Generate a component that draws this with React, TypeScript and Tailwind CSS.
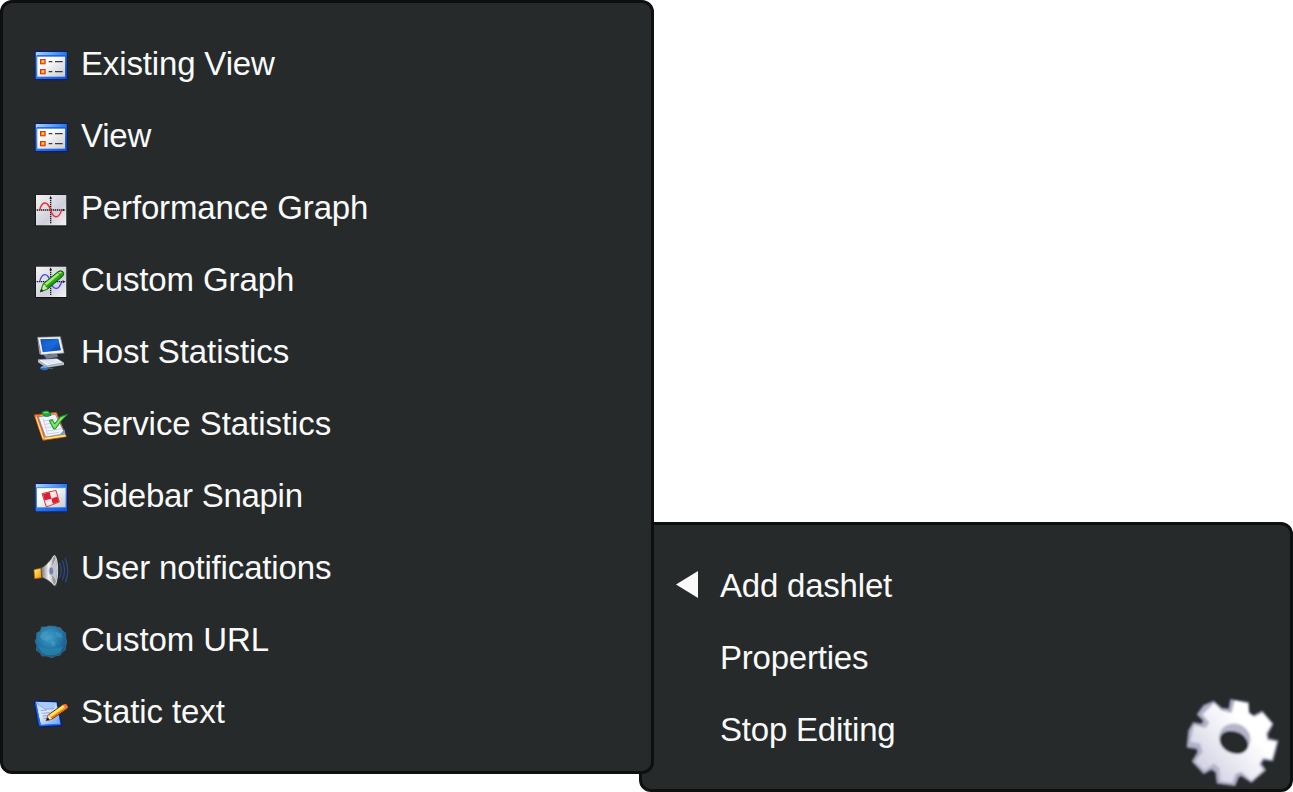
import type { ReactNode } from 'react';

function Icon({ box, children }: { box: string; children: ReactNode }) {
  return (
    <svg viewBox={box} className="mt-1 h-9 w-9 shrink-0" fill="none">
      {children}
    </svg>
  );
}

function Gradients() {
  return (
    <svg className="absolute h-0 w-0" aria-hidden="true">
      <defs>
        <linearGradient id="title" x1="0" x2="1" y1="0" y2="0">
          <stop offset="0" stopColor="#a5d2ff" />
          <stop offset="1" stopColor="#2379f0" />
        </linearGradient>
        <linearGradient id="frame" x1="0" x2="1" y1="0" y2="1">
          <stop offset="0" stopColor="#4b96f8" />
          <stop offset="1" stopColor="#0a58dc" />
        </linearGradient>
        <linearGradient id="paper" x1="0" x2="1" y1="0" y2="1">
          <stop offset="0.3" stopColor="#ffffff" />
          <stop offset="1" stopColor="#c9c9d2" />
        </linearGradient>
        <linearGradient id="plot" x1="0" x2="1" y1="0" y2="1">
          <stop offset="0" stopColor="#f4f4f6" />
          <stop offset="0.4" stopColor="#dcdce3" />
          <stop offset="0.6" stopColor="#d0cfdb" />
          <stop offset="1" stopColor="#f5f5f7" />
        </linearGradient>
        <linearGradient id="screen" x1="0" x2="1" y1="0" y2="1">
          <stop offset="0" stopColor="#0634a2" />
          <stop offset="0.55" stopColor="#1767d9" />
          <stop offset="1" stopColor="#073a9c" />
        </linearGradient>
        <linearGradient id="cone" x1="0" x2="1" y1="0" y2="0">
          <stop offset="0" stopColor="#6f6f73" />
          <stop offset="0.5" stopColor="#f4f4f4" />
          <stop offset="1" stopColor="#87878e" />
        </linearGradient>
        <linearGradient id="gold" x1="0" x2="1" y1="0" y2="1">
          <stop offset="0" stopColor="#fff58a" />
          <stop offset="0.5" stopColor="#ffc52d" />
          <stop offset="1" stopColor="#ef8309" />
        </linearGradient>
        <radialGradient id="globe" cx="0.45" cy="0.35" r="0.6">
          <stop offset="0" stopColor="#429cc9" />
          <stop offset="0.6" stopColor="#2379aa" />
          <stop offset="1" stopColor="#165b8c" />
        </radialGradient>
        <linearGradient id="note" x1="0" x2="1" y1="0" y2="1">
          <stop offset="0" stopColor="#a8ccff" />
          <stop offset="0.4" stopColor="#e1edff" />
          <stop offset="1" stopColor="#5e9df8" />
        </linearGradient>
        <linearGradient id="gear" x1="0.1" x2="0.8" y1="0.8" y2="0.2">
          <stop offset="0" stopColor="#d3d2e2" />
          <stop offset="0.45" stopColor="#ededf5" />
          <stop offset="0.8" stopColor="#ffffff" />
        </linearGradient>
        <filter id="gearSoft" x="-10%" y="-10%" width="120%" height="120%">
          <feGaussianBlur stdDeviation="3.6" />
        </filter>
        <filter id="soft">
          <feGaussianBlur stdDeviation="1.1" />
        </filter>
      </defs>
    </svg>
  );
}

function ViewIcon() {
  return (
    <Icon box="99 54 108 108">
      <rect x="104" y="62" width="99" height="89" rx="3" fill="#101b68" />
      <rect x="107" y="66" width="93" height="81" fill="url(#frame)" />
      <rect x="108" y="66" width="91" height="10" fill="url(#title)" />
      <rect x="111" y="76" width="85" height="4" fill="#1458c8" />
      <rect x="112" y="80" width="83" height="60" fill="url(#paper)" />
      {[87, 117].map((y) => (
        <g key={y}>
          <rect x="120" y={y} width="17" height="16" fill="#df3422" />
          <rect x="123" y={y + 4} width="11" height="9" fill="#f78a18" />
          <rect x="126" y={y + 4} width="6" height="6" fill="#ffe928" />
          <path d={`M146 ${y + 8}h11M165 ${y + 8}h23`} stroke="#3a3a40" strokeWidth="4" />
        </g>
      ))}
    </Icon>
  );
}

function Plot({ y, color }: { y: number; color: string }) {
  return (
    <g transform={`translate(0 ${y})`}>
      <rect x="46" y="-1" width="95" height="95" fill="#101212" />
      <rect x="48" y="0" width="91" height="91" fill="url(#plot)" />
      <path d="M50 45H132M92 9V86" stroke="#17171b" strokeWidth="4" strokeDasharray="4 2" />
      <path d="M92 2l-4 9h8zM137 45l-9-4v8z" fill="#17171b" />
      <path d="M59 45C66 18 81 17 91 42C99 71 115 74 125 45" stroke={color} strokeWidth="4" />
    </g>
  );
}

function PerformanceIcon() {
  return (
    <Icon box="39 36 108 108">
      <Plot y={45} color="#f52a2a" />
    </Icon>
  );
}

function CustomGraphIcon() {
  return (
    <Icon box="39 252 108 108">
      <Plot y={260} color="#4242ee" />
      <path d="M61 336L70 311L113 276Q120 269 129 275Q134 281 128 289L83 327Z" fill="#2ba81d" stroke="#0b5d0c" strokeWidth="3" />
      <path d="M73 311L116 277Q122 273 126 277L78 317Z" fill="#a3ee74" />
      <path d="M80 325L127 288" stroke="#128018" strokeWidth="3" />
      <path d="M62 335L70 312L77 314L78 320L83 322L82 327Z" fill="#c7ec97" stroke="#247718" strokeWidth="2" />
      <path d="M61 336l3-10 7 6z" fill="#0a370e" />
      <path d="M112 278Q122 281 123 290" stroke="#117413" strokeWidth="2" />
    </Icon>
  );
}

function HostIcon() {
  return (
    <Icon box="39 48 108 108">
      <path d="M65 99L89 104L110 97L114 111L80 116Z" fill="#777e91" />
      <path d="M53 52L121 50L132 99L63 104Z" fill="#f2f2f4" stroke="#8c8d99" strokeWidth="2" />
      <path d="M53 52L63 104L58 101L53 62Z" fill="#9a9daa" />
      <path d="M61 58L115 56L123 91L68 97Z" fill="url(#screen)" />
      <path d="M64 60L113 57L115 65Q92 81 67 82Z" fill="#1c75e4" opacity=".5" />
      <path d="M54 120L112 117L132 129L132 135L80 143L54 127Z" fill="#b8c0d4" />
      <path d="M54 119L111 116L131 128L81 137Z" fill="#fafaff" stroke="#8898b9" strokeWidth="2" />
      <path d="M65 121L106 119L119 127L83 132Z" fill="#ccd6ed" />
      <path d="M72 124L110 122M77 129L115 125" stroke="#fff" strokeWidth="2" />
      <path d="M60 146Q60 137 72 138Q87 140 85 147Q79 152 68 150Z" fill="#306ebf" />
      <path d="M64 143q6-5 15-1" stroke="#b7d5f5" strokeWidth="3" />
      <path d="M85 145h14" stroke="#777e90" strokeWidth="2" />
    </Icon>
  );
}

function ServiceIcon() {
  return (
    <Icon box="39 264 108 108">
      <path d="M43 285L109 277L139 350L69 361Z" fill="#f8ac35" stroke="#c84a20" strokeWidth="3" strokeLinejoin="round" />
      <path d="M46 287L60 285L75 353L68 357Z" fill="#f36b2e" />
      <path d="M48 290L70 356" stroke="#ffe371" strokeWidth="4" />
      <path d="M74 356L137 347" stroke="#ffe05f" strokeWidth="5" />
      <path d="M55 291L106 283L135 341L77 351Z" fill="#f5f7ff" stroke="#5178c1" strokeWidth="2" />
      <path d="M72 303l34-6M75 313l39-6M79 323l39-6M82 333l43-7M84 342l33-5" stroke="#bfcff0" strokeWidth="3" />
      <path d="M69 296l14 48" stroke="#d8a5df" strokeWidth="2" />
      <path d="M134 328L135 342L118 344Z" fill="#5c9eed" />
      <path d="M66 280Q64 275 70 274Q81 270 87 275Q94 282 93 286Q82 293 71 287Z" fill="#22aa49" stroke="#08752a" strokeWidth="2" />
      <path d="M71 278l14-1" stroke="#78dc69" strokeWidth="4" />
      <path d="M88 302L97 299L104 312L121 290L143 283Q124 299 106 327L101 327Z" fill="#69db4c" stroke="#118e22" strokeWidth="3" />
      <path d="M95 306L104 319L124 294" stroke="#b7f783" strokeWidth="2" />
    </Icon>
  );
}

function SnapinIcon() {
  return (
    <Icon box="39 30 108 108">
      <rect x="45" y="38" width="98" height="89" rx="3" fill="#101b68" />
      <rect x="47" y="42" width="94" height="82" fill="url(#frame)" />
      <rect x="48" y="42" width="91" height="10" fill="url(#title)" />
      <rect x="51" y="52" width="86" height="60" fill="url(#paper)" />
      <path d="M51 53h86" stroke="#1458c8" strokeWidth="2" />
      <g filter="url(#soft)">
        <path d="M66 71L108 61L118 96L79 111Z" fill="#f3a7ac" stroke="#cf3e49" strokeWidth="3" strokeLinejoin="round" />
        <path d="M69 73L89 67L94 86L74 91ZM94 86L112 80L116 95L98 101Z" fill="#d82431" />
        <path d="M90 67L106 64L111 79L94 85ZM75 92L94 87L98 102L81 108Z" fill="#f5e7eb" />
      </g>
    </Icon>
  );
}

function NotificationIcon() {
  return (
    <Icon box="39 246 108 108">
      <path d="M42 299L65 294L66 323L44 326Z" fill="url(#gold)" stroke="#a45a0b" strokeWidth="2" />
      <path d="M63 294Q82 285 100 257L106 254L109 348L102 347Q84 328 65 322Z" fill="url(#cone)" stroke="#393a3f" strokeWidth="2" />
      <ellipse cx="103" cy="301" rx="10" ry="44" fill="#98989f" stroke="#dcdce0" strokeWidth="3" />
      <path d="M96 286Q107 270 107 262Q115 292 108 333Q102 321 96 316Z" fill="#c4c4cc" />
      <ellipse cx="94" cy="303" rx="7" ry="12" fill="#7580a8" stroke="#b8bfdb" strokeWidth="3" />
      <path d="M119 279Q128 301 119 324M127 271Q140 301 127 331M135 263Q151 301 136 337" stroke="#294783" strokeWidth="4" />
    </Icon>
  );
}

function GlobeIcon() {
  return (
    <Icon box="39 42 108 108">
      <g filter="url(#soft)">
        <path d="M65 51L78 51L86 48L103 49L112 52L121 53L129 64L137 69L137 83L140 96L137 108L136 120L126 126L121 135L106 138L96 143L80 138L66 138L60 128L49 121L51 108L46 95L50 82L50 69L61 64Z" fill="url(#globe)" stroke="#49728e" strokeWidth="2" />
        <path d="M60 79L69 65L86 63L78 75L89 82L83 93L68 89ZM89 93L104 94L108 102L97 111ZM105 65L123 70L129 85L112 80Z" fill="#56a9cb" opacity=".4" />
        <path d="M54 108Q89 125 131 109L119 130Q90 143 66 130Z" fill="#2d88aa" opacity=".65" />
      </g>
    </Icon>
  );
}

function TextIcon() {
  return (
    <Icon box="39 258 108 108">
      <path d="M43 273L112 275L126 347L61 351L54 345Z" fill="#0c47cb" stroke="#081d64" strokeWidth="3" />
      <path d="M47 275L109 278L121 342L63 346Z" fill="url(#note)" />
      <path d="M48 276L110 278L101 297L75 297Z" fill="#a7caff" />
      <path d="M47 276L75 298L102 296" stroke="#7088d6" strokeWidth="2" />
      <path d="M47 280L60 346L122 343" stroke="#2568ed" strokeWidth="4" />
      <path d="M62 302l19-2M65 310l24-2M67 318l20-2M71 325l9-1" stroke="#7889b5" strokeWidth="2" />
      <path d="M78 332L86 314L128 284L138 282L144 291L139 298L95 328Z" fill="#f8a126" stroke="#713215" strokeWidth="3" />
      <path d="M88 315L129 286L134 291L93 321Z" fill="#ffea59" />
      <path d="M93 324L138 295" stroke="#e46015" strokeWidth="3" />
      <path d="M78 332L86 315L96 327Z" fill="#ffe5b1" />
      <path d="M78 332l5-10 6 7z" fill="#171717" />
      <path d="M129 284L138 282L144 291L139 297Z" fill="#f4763e" />
    </Icon>
  );
}

const gearOutline =
  'M147 25L198 33L199 62L214 73L240 60L271 96L255 126L257 141L286 148L278 180L271 205L244 201L235 215L249 234L208 269L178 249L168 254L158 279L107 272L103 240L89 230L66 243L33 208L49 181L46 169L17 164L22 116L35 94L61 98L66 86L48 67L66 42L95 30L118 50L143 53Z';

function GearIcon() {
  return (
    <svg viewBox="0 0 300 294" className="absolute right-2 -bottom-px h-[98px] w-[100px]" fill="none">
      <g filter="url(#gearSoft)" strokeLinejoin="round">
        <path d={gearOutline} fill="#b3b2c9" stroke="#a5a4bd" strokeWidth="6" />
        <path
          d="M160 29L195 37L198 66L216 78L241 66L266 96L249 123L253 147L280 152L267 199L242 194L228 217L240 234L208 263L179 237L159 243L149 269L118 265L115 228L96 211L68 232L43 208L65 180L57 153L28 147L38 103L72 111L85 91L65 68L96 37L118 59L151 66Z"
          fill="url(#gear)"
          stroke="url(#gear)"
          strokeWidth="5"
        />
        <ellipse cx="158" cy="140" rx="48" ry="45" transform="rotate(28 158 140)" fill="#b5b4ca" />
        <ellipse cx="156" cy="151" rx="44" ry="32" transform="rotate(24 156 151)" fill="#262a2b" />
      </g>
    </svg>
  );
}

const dashlets = [
  { label: 'Existing View', spacing: 'tracking-[-0.15px]', icon: <ViewIcon /> },
  { label: 'View', spacing: 'tracking-[-0.2px]', icon: <ViewIcon /> },
  { label: 'Performance Graph', spacing: 'tracking-[-0.15px]', icon: <PerformanceIcon /> },
  { label: 'Custom Graph', spacing: 'tracking-[-0.12px]', icon: <CustomGraphIcon /> },
  { label: 'Host Statistics', spacing: 'tracking-[-0.06px]', icon: <HostIcon /> },
  { label: 'Service Statistics', spacing: 'tracking-[-0.06px]', icon: <ServiceIcon /> },
  { label: 'Sidebar Snapin', spacing: 'tracking-[-0.28px]', icon: <SnapinIcon /> },
  { label: 'User notifications', spacing: 'tracking-[-0.16px]', icon: <NotificationIcon /> },
  { label: 'Custom URL', spacing: 'tracking-[-0.1px]', icon: <GlobeIcon /> },
  { label: 'Static text', spacing: 'tracking-[-0.1px]', icon: <TextIcon /> },
];

const actions = ['Add dashlet', 'Properties', 'Stop Editing'];

export default function App() {
  return (
    <main className="flex h-[792px] w-[1293px] items-start overflow-hidden bg-white font-['Liberation_Sans',Arial,sans-serif] text-[33px] leading-[72px] text-[#fafafa]">
      <Gradients />
      <ul className="relative z-10 h-[774px] w-[654px] shrink-0 rounded-xl border-3 border-[#0e1010] bg-[#262a2b] py-[25px] pl-[30px]">
        {dashlets.map(({ label, spacing, icon }) => (
          <li key={label} className="flex h-[72px] items-center gap-3">
            {icon}
            <span className={spacing}>{label}</span>
          </li>
        ))}
      </ul>
      <div className="relative mt-[522px] -ml-[15px] h-[270px] w-[654px] shrink-0 rounded-xl border-3 border-[#0e1010] bg-[#262a2b] py-[25px] pl-[34px]">
        <ul>
          {actions.map((label, index) => (
            <li key={label} className="flex h-[72px] items-center gap-[22px]">
              <span className="flex w-[22px] shrink-0">
                {index === 0 && (
                  <svg viewBox="0 0 22 28" className="-mt-[3px] h-7 w-[22px]">
                    <path d="M0 13.5L22 0v27z" fill="#fafafa" />
                  </svg>
                )}
              </span>
              <span className="tracking-[-0.21px]">{label}</span>
            </li>
          ))}
        </ul>
        <GearIcon />
      </div>
    </main>
  );
}
